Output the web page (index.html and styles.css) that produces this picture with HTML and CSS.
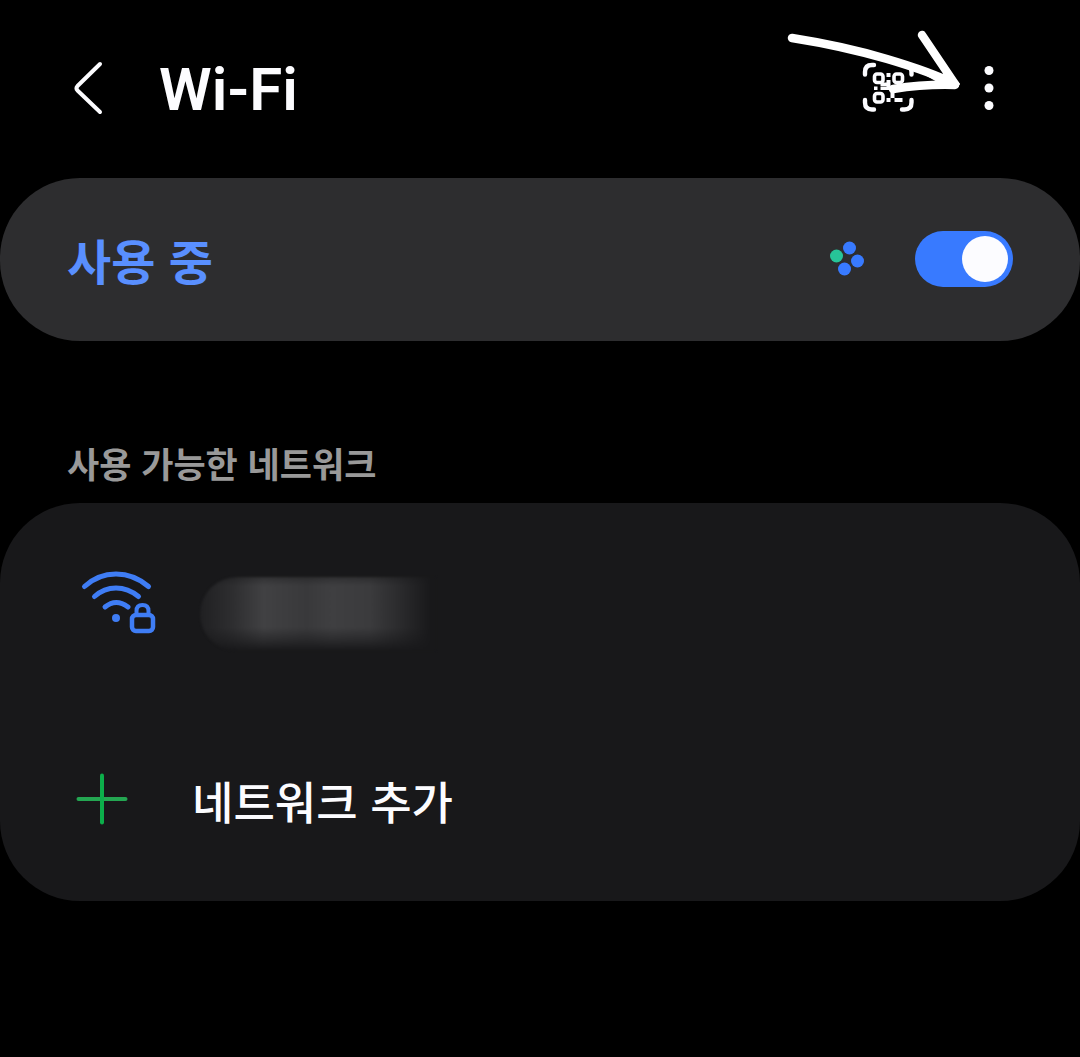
FILE: index.html
```html
<!DOCTYPE html>
<html lang="ko">
<head>
<meta charset="utf-8">
<meta name="viewport" content="width=device-width, initial-scale=1">
<title>Wi-Fi</title>
<link rel="stylesheet" href="styles.css">
</head>
<body>
<header class="topbar">
  <button class="icon-button back" type="button" aria-label="뒤로">
    <svg width="32" height="56" viewBox="0 0 32 56" fill="none" stroke="currentColor" stroke-width="4" stroke-linecap="round" stroke-linejoin="round"><path d="M28 4 5.500 26Q3.500 28.300 5.500 30.500L28 52"/></svg>
  </button>
  <h1 class="title">Wi-Fi</h1>
  <button class="icon-button qr" type="button" aria-label="QR 코드 스캔">
    <svg width="52" height="52" viewBox="0 0 52 52" fill="none" stroke="currentColor">
      <path stroke-width="4.400" stroke-linecap="round" d="M3 12.500V10Q3 3 10 3H12M40 3h2.500Q49.500 3 49.500 10v2.500M49.500 38v2.500q0 7-7 7H40M12 47.500H10q-7 0-7-7V38"/>
      <g stroke-width="3.600"><rect x="12.500" y="12" width="8.500" height="8.500" rx="2.500"/><rect x="32" y="12" width="8.500" height="8.500" rx="2.500"/><rect x="12.500" y="31.500" width="8.500" height="8.500" rx="2.500"/></g>
      <path fill="currentColor" stroke="none" d="M24.500 11h4v4h-4zM24.500 18h4v6h4v8h-4v-4h-4v-4h-6v-3.500h6zM12 24.500h3.500V28H12zM18.500 24.500h6V28h-6zM32 24h9v4h-9zM24.500 36h4v4h-4zM28.500 32h4v4h-4zM32.500 36h8v4h-8z"/>
    </svg>
  </button>
  <button class="icon-button more" type="button" aria-label="옵션 더보기">
    <svg width="12" height="48" viewBox="0 0 12 48" fill="currentColor"><circle cx="6" cy="6.500" r="4.500"/><circle cx="6" cy="24" r="4.500"/><circle cx="6" cy="41.500" r="4.500"/></svg>
  </button>
  <svg class="pointer" width="180" height="70" viewBox="0 0 180 70" fill="none" stroke="currentColor" stroke-linecap="round" stroke-linejoin="round" aria-hidden="true">
    <path stroke-width="8.500" d="M9 10Q60 18 104 31T172 56L139 7"/>
    <path stroke-width="8.500" d="M172 57Q142 56 110 61"/>
    <path fill="currentColor" stroke-width="2" d="M142 46 168 48 176 56 171 60 140 60 156 54Z"/>
  </svg>
</header>

<main>
  <section class="card status">
    <label class="status-label" for="wifi">사용 중</label>
    <svg class="spinner" width="36" height="36" viewBox="0 0 36 36" role="img" aria-label="검색 중"><g fill="#387aff"><circle cx="20.500" cy="7" r="6.500"/><circle cx="28.500" cy="20" r="6.500"/><circle cx="15.500" cy="28" r="6.500"/></g><circle cx="7.500" cy="15" r="6.500" fill="#27c498"/></svg>
    <input class="switch" id="wifi" type="checkbox" role="switch" checked>
  </section>

  <h2 class="section-title">사용 가능한 네트워크</h2>
  <section class="card networks">
    <button class="row" type="button" aria-label="보안 네트워크">
      <svg class="wifi-icon" width="80" height="68" viewBox="0 0 80 68" fill="none" stroke="currentColor" stroke-width="5" stroke-linecap="round">
        <path d="M6.500 18.500Q20 6 38 6T70.500 18.500M16.500 28.500Q26 20 38 20T60.500 28.500M27 39Q38 30 50 39"/>
        <circle cx="38" cy="50" r="4" fill="currentColor" stroke="none"/>
        <rect x="54" y="47" width="21" height="16" rx="4" stroke-width="4.500"/>
        <path stroke-width="4" stroke-linecap="butt" d="M58.500 46v-3q0-6 6-6t6 6v3"/>
      </svg>
      <span class="hidden-name"></span>
    </button>
    <button class="row" type="button">
      <svg class="plus-icon" width="52" height="52" viewBox="0 0 52 52" fill="none" stroke-width="4" stroke-linecap="round"><path stroke="#24a652" d="M2.500 26h47"/><path stroke="#0cae4a" d="M26 2.500v47"/></svg>
      <span class="add-label">네트워크 추가</span>
    </button>
  </section>
</main>
</body>
</html>
```

FILE: styles.css
```css
* {
  box-sizing: border-box;
}

body {
  margin: 0;
  background: #000;
  color: #fcfcff;
  font-family: Roboto, "Noto Sans CJK KR", sans-serif;
}

button {
  padding: 0;
  border: 0;
  background: none;
  color: inherit;
  font: inherit;
  text-align: left;
  cursor: pointer;
}

svg {
  display: block;
  flex: none;
}

.topbar {
  position: relative;
  display: flex;
  align-items: center;
  height: 178px;
  padding: 0 85px 2px 72px;
}

.title {
  flex: 1;
  margin: 0 0 0 55px;
  padding-top: 4px;
  font-size: 60px;
  font-weight: 600;
  line-height: 72px;
}

.more {
  margin-left: 69px;
}

.pointer {
  position: absolute;
  top: 28px;
  right: 117px;
  color: #fff;
  pointer-events: none;
}

.card {
  border-radius: 80px;
}

.status {
  display: flex;
  align-items: center;
  height: 163px;
  padding: 0 67px 2px;
  background: #2d2d2f;
}

.status-label {
  flex: 1;
  color: #598fff;
  font-family: "Noto Sans CJK KR", sans-serif;
  font-size: 48px;
  font-weight: 700;
  line-height: 72px;
}

.spinner {
  margin-right: 50px;
}

.switch {
  appearance: none;
  display: flex;
  align-items: center;
  justify-content: flex-end;
  width: 98px;
  height: 56px;
  margin: 0;
  padding: 0 5px;
  border-radius: 28px;
  background: #387aff;
}

.switch::before {
  content: "";
  width: 46px;
  height: 46px;
  border-radius: 50%;
  background: #fcfcff;
}

.switch:not(:checked) {
  justify-content: flex-start;
  background: #68686c;
}

.section-title {
  margin: 0;
  padding: 96px 67px 14px;
  color: #999;
  font-family: "Noto Sans CJK KR", sans-serif;
  font-size: 35px;
  font-weight: 700;
  line-height: 52px;
}

.networks {
  padding-bottom: 4px;
  background: #18181a;
}

.row {
  display: flex;
  align-items: center;
  width: 100%;
  height: 197px;
  padding: 0 76px;
}

.wifi-icon {
  margin-left: 2px;
  color: #3f7df5;
}

.hidden-name {
  width: 236px;
  height: 74px;
  margin: 24px 0 0 42px;
  border-radius: 38px 0 0 38px;
  background:
    linear-gradient(#18181a66, #18181a00 12%, #18181a00 68%, #18181a88 86%, #18181a),
    linear-gradient(90deg, #202022, #2e2e30 14%, #414143 27%, #39393b 45%, #3f3f41 56%, #3b3b3d 72%, #29292b 86%, #18181a 98%);
  filter: blur(1px);
}

.add-label {
  margin-left: 64px;
  padding-top: 4px;
  font-family: "Noto Sans CJK KR", sans-serif;
  font-size: 45px;
  font-weight: 500;
  line-height: 68px;
}
```
